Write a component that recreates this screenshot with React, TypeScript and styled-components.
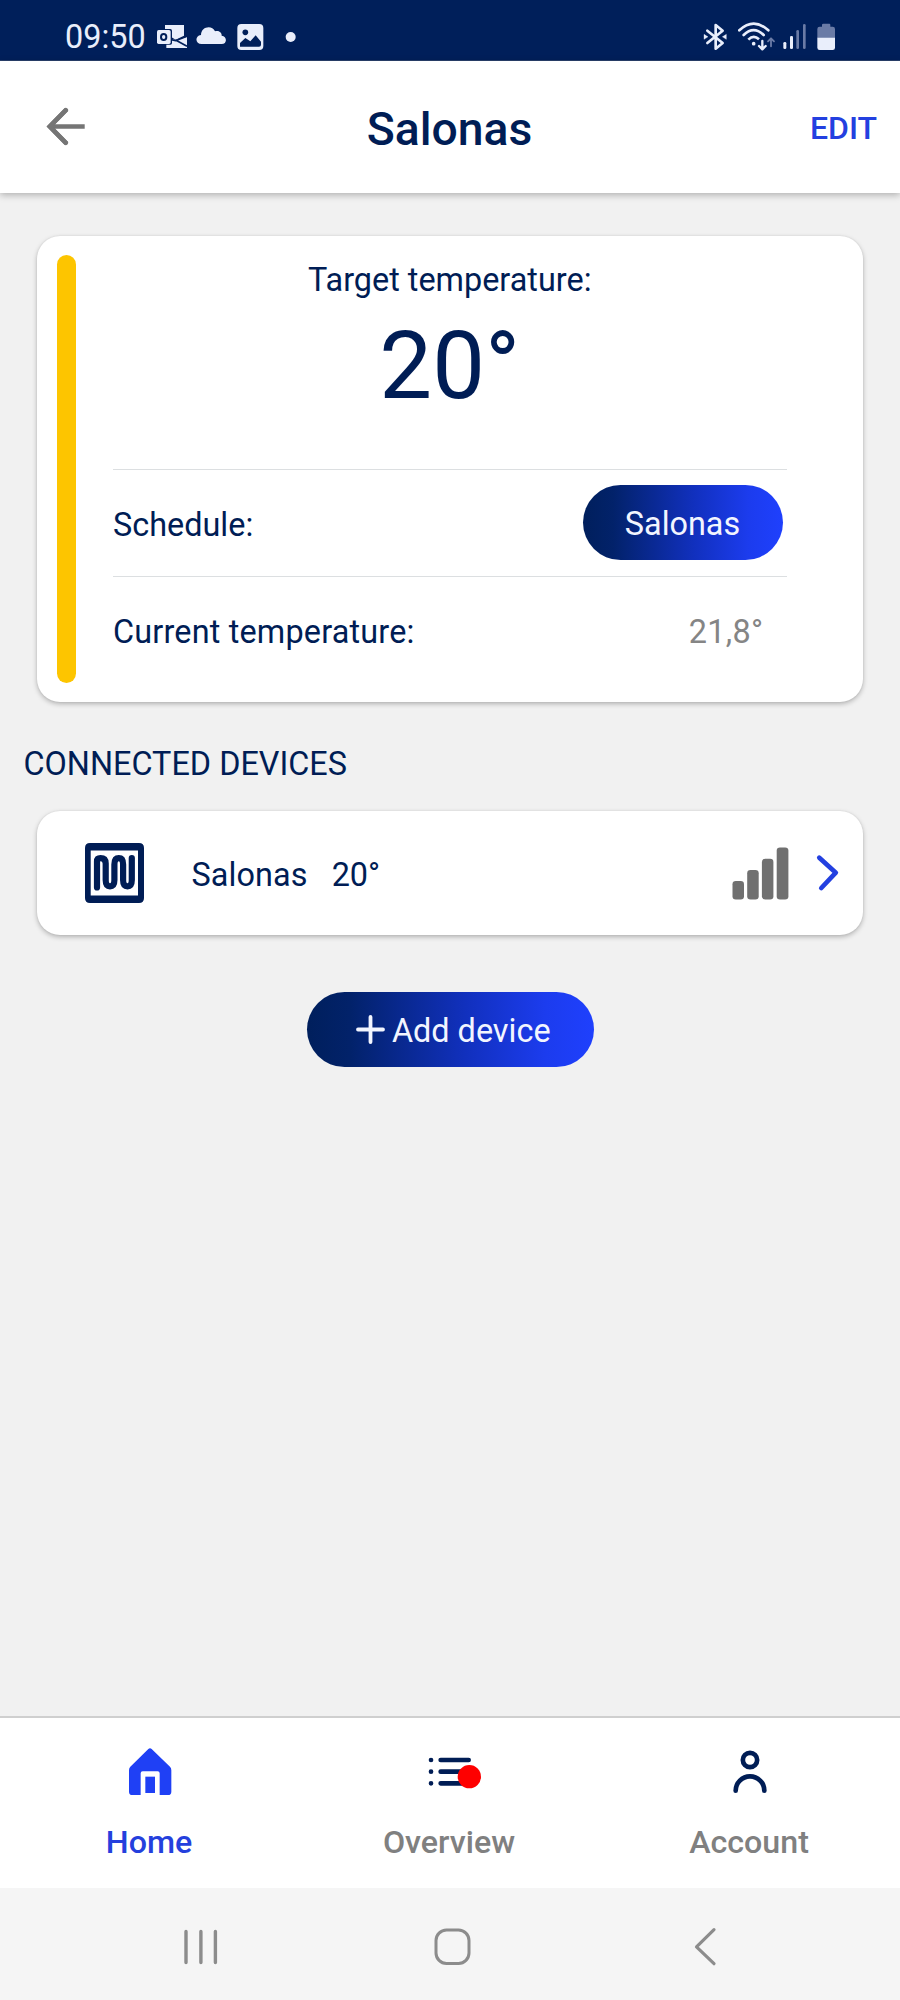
import React from "react";
import styled, { createGlobalStyle } from "styled-components";

const navy = "#001d55";
const blue = "#1f40f5";
const statusWhite = "#e9eefb";
const statusDim = "#6a7ba6";

const GlobalStyle = createGlobalStyle`
  * { box-sizing: border-box; }
  body { margin: 0; background: #f1f1f1; }
  svg { display: block; flex: none; }
`;

const Screen = styled.div`
  width: 900px;
  height: 2000px;
  display: flex;
  flex-direction: column;
  overflow: hidden;
  background: #f1f1f1;
  color: ${navy};
  font-family: Roboto, "Liberation Sans", sans-serif;
  font-size: 32.4px;
  line-height: 40px;
`;

const StatusBar = styled.header`
  flex: none;
  height: 61px;
  display: flex;
  justify-content: space-between;
  align-items: flex-start;
  padding: 16px 60px 0 65px;
  background: #001f5a;
  border-bottom: 1px solid #2b416d;
  color: ${statusWhite};
`;

const StatusGroup = styled.div`
  display: flex;
  height: 41px;
  align-items: flex-start;
`;

const Clock = styled.span`
  width: 87px;
  line-height: 42px;
`;

const AppBar = styled.div`
  position: relative;
  flex: none;
  height: 132px;
  display: grid;
  grid-template-columns: 1fr auto 1fr;
  align-items: center;
  padding: 0 23px 0 46px;
  background: #fff;
  box-shadow: 0 2px 7px rgba(0, 0, 0, 0.28);
`;

const TitleArea = styled.h1`
  margin: 3px 0 0 -24px;
  font-size: 46.3px;
  font-weight: 500;
  line-height: 56px;
`;

const EditButton = styled.button`
  justify-self: end;
  margin: 2px 0 0;
  padding: 0;
  border: 0;
  background: none;
  color: #2340e0;
  font: 500 32px/40px Roboto, sans-serif;
`;

const Content = styled.main`
  flex: 1;
  display: flex;
  flex-direction: column;
  padding: 43px 37px 0;
`;

const Card = styled.section`
  flex: none;
  display: flex;
  background: #fff;
  border-radius: 23px;
  box-shadow: 0 2px 5px rgba(0, 0, 0, 0.26), 0 0 2px rgba(0, 0, 0, 0.08);
`;

const RoomCard = styled(Card)`
  height: 466px;
  padding: 18.5px 76.5px 19.5px 19.5px;
`;

const Accent = styled.div`
  flex: none;
  width: 19px;
  margin-right: 37.5px;
  border-radius: 9.5px;
  background: #fdc500;
`;

const RoomInfo = styled.div`
  flex: 1;
  display: flex;
  flex-direction: column;
  padding-top: 4.5px;
`;

const Target = styled.div`
  height: 210px;
  display: flex;
  flex-direction: column;
  align-items: center;
  padding-top: 1px;
`;

const TargetValue = styled.div`
  margin-top: 11px;
  font-size: 94px;
  line-height: 110px;
`;

const InfoRow = styled.div`
  height: 107px;
  display: flex;
  align-items: center;
  justify-content: space-between;
  border-top: 1.5px solid #dcdfe1;
`;

const RowLabel = styled.span<{ $spacing?: number }>`
  padding-top: 5px;
  letter-spacing: ${(p) => p.$spacing ?? 0}px;
`;

const RowValue = styled.span`
  padding: 5px 23px 0 0;
  color: #858585;
  letter-spacing: 0.35px;
`;

const Pill = styled.button`
  flex: none;
  display: flex;
  align-items: center;
  justify-content: center;
  height: 75px;
  border: 0;
  border-radius: 37.5px;
  padding: 0;
  background: linear-gradient(90deg, #001f5c 0%, #02226a 15%, #1130bd 55%, #1c3cee 83%, #1f40fd 100%);
  color: #f2f5ff;
  font: 400 32.4px/40px Roboto, sans-serif;
`;

const ScheduleButton = styled(Pill)`
  width: 200px;
  margin-right: 4px;
`;

const AddButton = styled(Pill)`
  align-self: center;
  width: 287px;
  gap: 7px;
  margin-top: 56.5px;
  padding-left: 6.5px;
`;

const ButtonText = styled.span`
  padding-top: 3px;
`;

const SectionTitle = styled.h2`
  margin: 42px 0 27px -13.5px;
  font-size: 32.4px;
  font-weight: 400;
  line-height: 40px;
`;

const DeviceCard = styled(Card)`
  height: 124px;
  align-items: center;
  padding: 0 25.5px 0 48px;
`;

const DeviceName = styled.span`
  margin: 4px 24px 0 47.5px;
  letter-spacing: 0.1px;
`;

const DeviceTemp = styled.span`
  flex: 1;
  margin-top: 4px;
`;

const TabBar = styled.nav`
  flex: none;
  height: 172px;
  display: flex;
  border-top: 2px solid #cfcfcf;
  background: #fff;
`;

const Tab = styled.a<{ $active?: boolean }>`
  flex: 1;
  display: flex;
  flex-direction: column;
  align-items: center;
  gap: 18px;
  padding-top: 22px;
  color: ${(p) => (p.$active ? "#2440dd" : "#808080")};
  font-size: 32.2px;
  font-weight: 500;
`;

const TabLabel = styled.span`
  margin-right: 2px;
`;

const SystemBar = styled.footer`
  flex: none;
  height: 112px;
  display: flex;
  align-items: flex-start;
  justify-content: space-between;
  padding: 39px 175px 0 181px;
  background: #f5f5f5;
`;

const OutlookIcon = () => (
  <svg width="40" height="41" viewBox="306 48 120 123">
    <path d="M345 75H402V107L377 119L345 100Z" fill={statusWhite} />
    <path d="M411 110V144H349V118H372L378 121Z" fill={statusWhite} />
    <path d="M411 109L377 122L345 115M378 121L411 139" stroke="#001f5a" strokeWidth="5" fill="none" />
    <rect x="319" y="87" width="47" height="47" rx="5" fill="#001f5a" />
    <rect x="321" y="90" width="41" height="42" rx="5" fill={statusWhite} />
    <ellipse cx="341" cy="111" rx="8" ry="9" fill="none" stroke="#001f5a" strokeWidth="6" />
  </svg>
);

const CloudIcon = () => (
  <svg width="40" height="41" viewBox="426 48 120 123">
    <path
      d="M455 132C435 132 434 107 453 105C453 80 486 74 495 94C508 90 516 99 515 107C532 109 532 132 515 132Z"
      fill={statusWhite}
    />
  </svg>
);

const PictureIcon = () => (
  <svg width="40" height="41" viewBox="546 48 120 123">
    <rect x="562" y="72" width="78" height="78" rx="12" fill={statusWhite} />
    <circle cx="586" cy="97" r="8.5" fill="#001f5a" />
    <path d="M570 140V129L586 114L601 124L617 106L633 125V134Q633 140 627 140Z" fill="#001f5a" />
  </svg>
);

const MoreDot = () => (
  <svg width="40" height="41" viewBox="666 48 120 123">
    <circle cx="722" cy="111" r="15" fill={statusWhite} />
  </svg>
);

const BluetoothIcon = () => (
  <svg width="32" height="41" viewBox="30 48 96 123">
    <path
      d="M52 92L98 129L77 146V75L98 92L52 129"
      fill="none"
      stroke={statusWhite}
      strokeWidth="8"
      strokeLinecap="round"
      strokeLinejoin="round"
    />
    <path d="M42 103L54 110.500L42 118ZM109 103L97 110.500L109 118Z" fill={statusWhite} stroke={statusWhite} strokeWidth="1" />
  </svg>
);

const WifiIcon = () => (
  <svg width="46" height="41" viewBox="126 48 138 123">
    <g fill="none" stroke={statusWhite} strokeWidth="8" strokeLinecap="round">
      <path d="M148 91Q191 51 235 91" />
      <path d="M161 105Q191 76 221 105" />
      <path d="M175 119Q191 103 207 118" strokeLinecap="butt" />
      <path d="M217 123V147M207 138L217 148L227 138" strokeWidth="7" strokeLinejoin="round" />
    </g>
    <circle cx="191" cy="131" r="5.500" fill={statusWhite} />
    <path
      d="M243 139V115M234 124L243 115L252 124"
      fill="none"
      stroke={statusDim}
      strokeWidth="5.500"
      strokeLinecap="round"
      strokeLinejoin="round"
    />
  </svg>
);

const CellularIcon = () => (
  <svg width="33" height="41" viewBox="264 48 99 123">
    <rect x="280" y="126" width="9" height="21" rx="4" fill={statusWhite} />
    <rect x="300" y="108" width="9" height="39" rx="4" fill={statusWhite} />
    <rect x="319" y="90" width="8" height="57" rx="4" fill={statusDim} />
    <rect x="339" y="72" width="8" height="75" rx="4" fill={statusDim} />
  </svg>
);

const BatteryIcon = () => (
  <svg width="29" height="41" viewBox="363 48 87 123">
    <path d="M382 114V87Q382 80 389 80H396V75Q396 71 400 71H418Q421 71 421 75V80H428Q435 80 435 87V114Z" fill={statusDim} />
    <path d="M382 113H435V143Q435 150 428 150H389Q382 150 382 143Z" fill={statusWhite} />
  </svg>
);

const BackArrow = () => (
  <svg width="40" height="40" viewBox="0 0 40 40">
    <path
      d="M38.700 19.500H4M20.500 2.500L3.800 19.500L20.500 36.500"
      fill="none"
      stroke="#757575"
      strokeWidth="4.600"
    />
    <path d="M19.800 3.200L3.800 19.500L19.800 35.800" fill="none" stroke="#757575" strokeWidth="4.600" strokeLinecap="round" />
  </svg>
);

const HeatingIcon = () => (
  <svg width="59" height="60" viewBox="0 0 59 60">
    <path
      fillRule="evenodd"
      d="M5 0H54Q59 0 59 5V55Q59 60 54 60H5Q0 60 0 55V5Q0 0 5 0ZM5.700 7.500V52.500H53V7.500Z"
      fill={navy}
    />
    <path
      d="M12 44.500V18.500Q12 15.200 15.500 15.200Q20.700 15.200 20.700 20.500V37Q20.700 43.300 25 43.300Q29.400 43.300 29.400 37V21.500Q29.400 15.200 33.800 15.200Q38.100 15.200 38.100 21.500V37Q38.100 43.300 42.500 43.300Q46.800 43.300 46.800 37V15"
      fill="none"
      stroke={navy}
      strokeWidth="6.200"
      strokeLinecap="round"
    />
  </svg>
);

const SignalBars = () => (
  <svg width="57" height="53" viewBox="0 0 57 53" fill="#707070">
    <rect x="0.500" y="34" width="11.500" height="18.500" rx="3.300" />
    <rect x="15.200" y="23" width="11.500" height="29.500" rx="3.300" />
    <rect x="29.900" y="11.800" width="11.500" height="40.700" rx="3.300" />
    <rect x="44.700" y="0.500" width="11.700" height="52" rx="3.300" />
  </svg>
);

const Chevron = () => (
  <svg width="49" height="40" viewBox="0 0 49 40" overflow="visible">
    <path
      d="M30.300 4.700L46.800 19.700L32.300 35"
      fill="none"
      stroke="#2340e0"
      strokeWidth="4.700"
      strokeLinecap="round"
      strokeLinejoin="round"
    />
  </svg>
);

const PlusIcon = () => (
  <svg width="29" height="29" viewBox="0 0 29 29">
    <path d="M14.500 2V27M2 14.500H27" stroke="#f2f5ff" strokeWidth="3.800" strokeLinecap="round" />
  </svg>
);

const HomeIcon = () => (
  <svg width="64" height="64" viewBox="174 120 192 192">
    <path
      d="M265 147Q270 142 275 147L330 200Q334 204 334 211V275Q334 285 324 285H299V220Q299 214 293 214H248Q242 214 242 220V285H217Q207 285 207 275V211Q207 204 211 200Z"
      fill={blue}
    />
    <rect x="256" y="230" width="29" height="49" fill={blue} />
  </svg>
);

const OverviewIcon = () => (
  <svg width="64" height="64" viewBox="1074 120 192 192">
    <g stroke={navy} strokeWidth="14" strokeLinecap="round">
      <path d="M1142 180H1226M1142 215H1226M1142 250H1226" />
      <path d="M1113 180h.1M1113 215h.1M1113 250h.1" />
    </g>
    <circle cx="1228" cy="230" r="35" fill="#fe0000" />
  </svg>
);

const AccountIcon = () => (
  <svg width="64" height="64" viewBox="654 120 192 192">
    <g fill="none" stroke={navy} strokeWidth="14" strokeLinecap="round">
      <circle cx="750" cy="180" r="21.500" />
      <path d="M707 272A43 43 0 0 1 793 272" />
    </g>
  </svg>
);

const RecentsIcon = () => (
  <svg width="40" height="40" viewBox="0 0 40 40">
    <path d="M5 4.500V35.500M19.900 4.500V35.500M34.400 4.500V35.500" stroke="#8c8c8c" strokeWidth="3.400" strokeLinecap="round" />
  </svg>
);

const SystemHomeIcon = () => (
  <svg width="40" height="40" viewBox="0 0 40 40">
    <rect x="3" y="3" width="33" height="33.500" rx="10.500" fill="none" stroke="#8c8c8c" strokeWidth="3" />
  </svg>
);

const SystemBackIcon = () => (
  <svg width="40" height="40" viewBox="0 0 40 40">
    <path
      d="M29 2.700L11.500 19.800L29 36.700"
      fill="none"
      stroke="#8c8c8c"
      strokeWidth="3.200"
      strokeLinecap="round"
      strokeLinejoin="round"
    />
  </svg>
);

export default function App() {
  return (
    <Screen>
      <GlobalStyle />
      <StatusBar>
        <StatusGroup>
          <Clock>09:50</Clock>
          <OutlookIcon />
          <CloudIcon />
          <PictureIcon />
          <MoreDot />
        </StatusGroup>
        <StatusGroup>
          <BluetoothIcon />
          <WifiIcon />
          <CellularIcon />
          <BatteryIcon />
        </StatusGroup>
      </StatusBar>
      <AppBar>
        <BackArrow />
        <TitleArea>Salonas</TitleArea>
        <EditButton>EDIT</EditButton>
      </AppBar>
      <Content>
        <RoomCard>
          <Accent />
          <RoomInfo>
            <Target>
              <span>Target temperature:</span>
              <TargetValue>20°</TargetValue>
            </Target>
            <InfoRow>
              <RowLabel>Schedule:</RowLabel>
              <ScheduleButton>
                <ButtonText>Salonas</ButtonText>
              </ScheduleButton>
            </InfoRow>
            <InfoRow>
              <RowLabel $spacing={0.18}>Current temperature:</RowLabel>
              <RowValue>21,8°</RowValue>
            </InfoRow>
          </RoomInfo>
        </RoomCard>
        <SectionTitle>CONNECTED DEVICES</SectionTitle>
        <DeviceCard>
          <HeatingIcon />
          <DeviceName>Salonas</DeviceName>
          <DeviceTemp>20°</DeviceTemp>
          <SignalBars />
          <Chevron />
        </DeviceCard>
        <AddButton>
          <PlusIcon />
          <ButtonText>Add device</ButtonText>
        </AddButton>
      </Content>
      <TabBar>
        <Tab $active>
          <HomeIcon />
          <TabLabel>Home</TabLabel>
        </Tab>
        <Tab>
          <OverviewIcon />
          <TabLabel>Overview</TabLabel>
        </Tab>
        <Tab>
          <AccountIcon />
          <TabLabel>Account</TabLabel>
        </Tab>
      </TabBar>
      <SystemBar>
        <RecentsIcon />
        <SystemHomeIcon />
        <SystemBackIcon />
      </SystemBar>
    </Screen>
  );
}
